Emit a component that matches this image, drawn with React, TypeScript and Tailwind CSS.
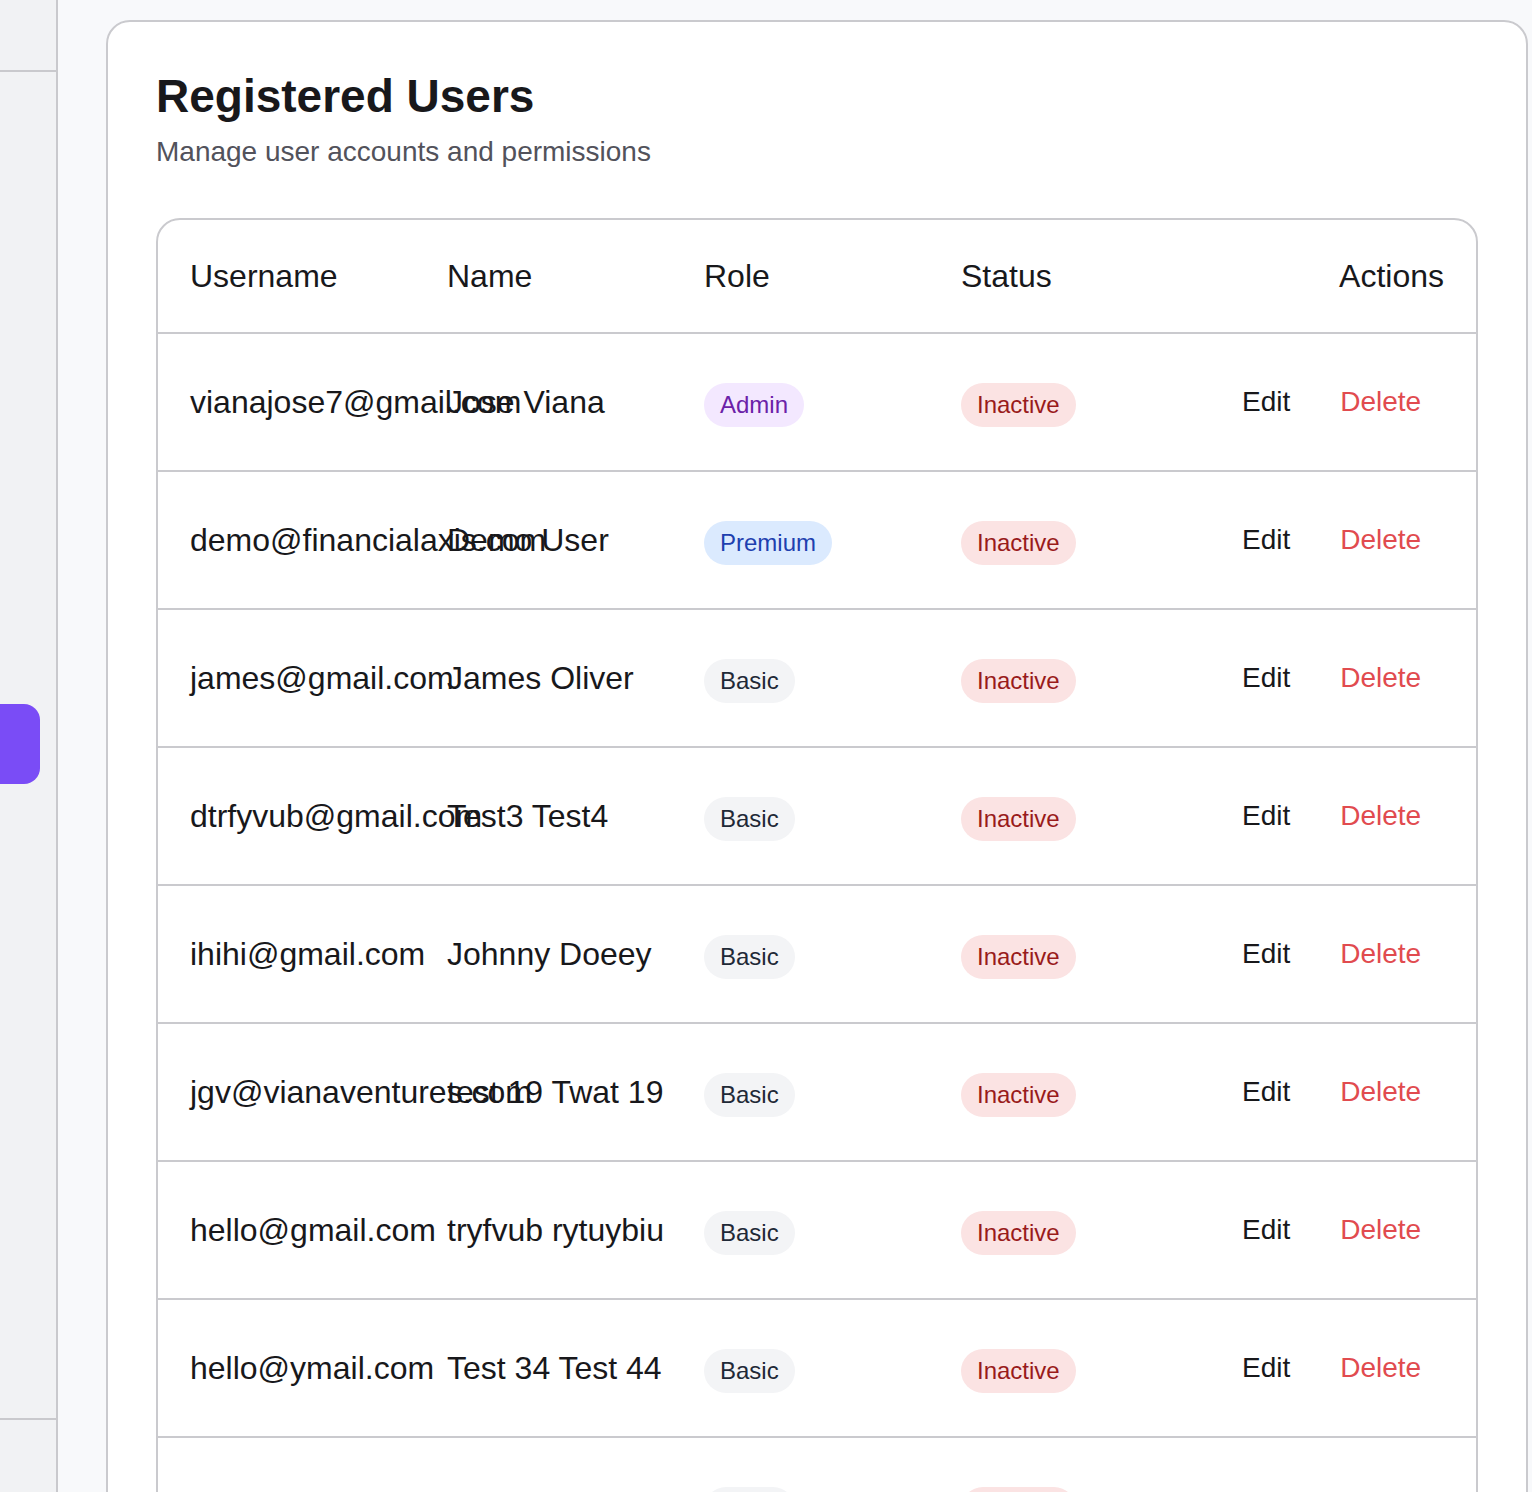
import React from "react";

type Role = "Admin" | "Premium" | "Basic";

type UserRow = {
  username: string;
  name: string;
  role: Role;
  active: boolean;
};

const users: UserRow[] = [
  { username: "vianajose7@gmail.com", name: "Jose Viana", role: "Admin", active: false },
  { username: "demo@financialaxis.com", name: "Demo User", role: "Premium", active: false },
  { username: "james@gmail.com", name: "James Oliver", role: "Basic", active: false },
  { username: "dtrfyvub@gmail.com", name: "Test3 Test4", role: "Basic", active: false },
  { username: "ihihi@gmail.com", name: "Johnny Doeey", role: "Basic", active: false },
  { username: "jgv@vianaventures.com", name: "test 19 Twat 19", role: "Basic", active: false },
  { username: "hello@gmail.com", name: "tryfvub rytuybiu", role: "Basic", active: false },
  { username: "hello@ymail.com", name: "Test 34 Test 44", role: "Basic", active: false },
  { username: "test@gmail.com", name: "Test User", role: "Basic", active: false },
];

const roleStyles: Record<Role, string> = {
  Admin: "bg-[#f3e8ff] text-[#6b21a8]",
  Premium: "bg-[#dbeafe] text-[#1e40af]",
  Basic: "bg-[#f3f4f6] text-[#1f2937]",
};

const cols = "grid grid-cols-[257px_257px_257px_257px_1fr]";

function Badge({ className, children }: { className: string; children: React.ReactNode }) {
  return (
    <span
      className={`mt-[6px] inline-flex h-[44px] items-center rounded-full px-[16px] text-[24px] leading-none ${className}`}
    >
      {children}
    </span>
  );
}

export default function App() {
  return (
    <div className="flex h-[1492px] overflow-hidden bg-[#f8f9fb] font-['Liberation_Sans',Arial,sans-serif] text-[#18181b]">
      {/* sidebar */}
      <aside className="flex w-[58px] shrink-0 flex-col border-r-2 border-[#c9c9cd] bg-[#f1f2f4]">
        <div className="h-[72px] shrink-0 border-b-2 border-[#c9c9cd]" />
        <div className="flex-1">
          <div className="mt-[632px] h-[80px] w-[40px] rounded-r-[16px] bg-[#7a4cf6]" />
        </div>
        <div className="h-[74px] shrink-0 border-t-2 border-[#c9c9cd]" />
      </aside>

      {/* main */}
      <main className="min-w-0 flex-1 pl-[48px] pr-[4px] pt-[20px]">
        <section className="rounded-[24px] border-2 border-[#cacace] bg-white px-[48px] pt-[50px] pb-[48px]">
          <h1 className="text-[46px] font-bold leading-[48px]">Registered Users</h1>
          <p className="mt-[12px] text-[28px] leading-[40px] text-[#52525b]">
            Manage user accounts and permissions
          </p>

          <div className="mt-[46px] overflow-hidden rounded-[24px] border-2 border-[#cacace]">
            <div className={`${cols} h-[114px] items-center border-b-2 border-[#cacace] text-[32px]`}>
              <div className="px-[32px]">Username</div>
              <div className="px-[32px]">Name</div>
              <div className="px-[32px]">Role</div>
              <div className="px-[32px]">Status</div>
              <div className="px-[32px] text-right">Actions</div>
            </div>

            {users.map((u) => (
              <div
                key={u.username}
                className={`${cols} h-[138px] items-center border-b-2 border-[#cacace] text-[32px]`}
              >
                <div className="whitespace-nowrap px-[32px]">{u.username}</div>
                <div className="whitespace-nowrap px-[32px]">{u.name}</div>
                <div className="px-[32px]">
                  <Badge className={roleStyles[u.role]}>{u.role}</Badge>
                </div>
                <div className="px-[32px]">
                  {u.active ? (
                    <Badge className="bg-[#dcfce7] text-[#166534]">Active</Badge>
                  ) : (
                    <Badge className="bg-[#fbe3e3] text-[#991b1b]">Inactive</Badge>
                  )}
                </div>
                <div className="flex items-center justify-end gap-[2px] px-[32px] text-[28px]">
                  <button type="button" className="px-[24px] py-[6px] text-[#18181b]">
                    Edit
                  </button>
                  <button type="button" className="px-[24px] py-[6px] text-[#e14b4f]">
                    Delete
                  </button>
                </div>
              </div>
            ))}
          </div>
        </section>
      </main>
    </div>
  );
}
